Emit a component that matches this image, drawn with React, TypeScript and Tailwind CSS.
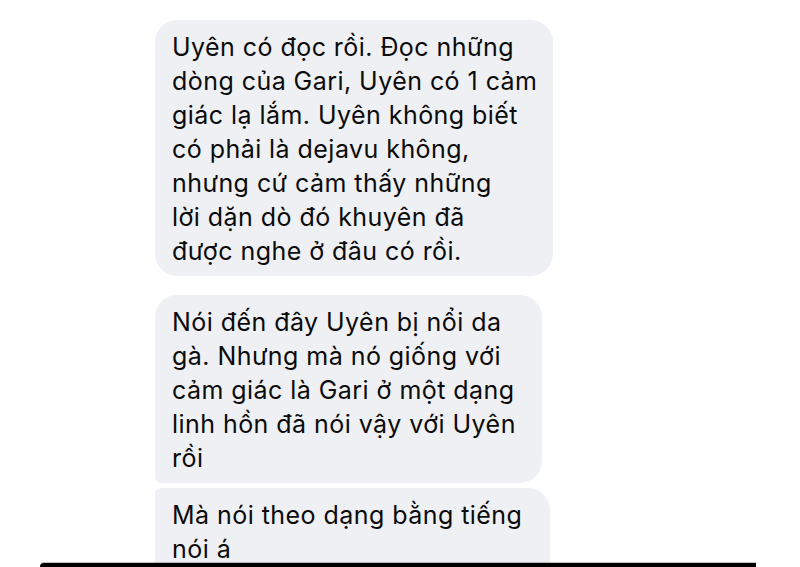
import React from 'react';

interface Bubble {
    lines: string[];
    width: string;
    corners: string;
    gap: string;
}

const bubbles: Bubble[] = [
    {
        lines: [
            'Uyên có đọc rồi. Đọc những',
            'dòng của Gari, Uyên có 1 cảm',
            'giác lạ lắm. Uyên không biết',
            'có phải là dejavu không,',
            'nhưng cứ cảm thấy những',
            'lời dặn dò đó khuyên đã',
            'được nghe ở đâu có rồi.',
        ],
        width: 'w-[398px]',
        corners: 'rounded-[22px]',
        gap: 'mt-[20px]',
    },
    {
        lines: [
            'Nói đến đây Uyên bị nổi da',
            'gà. Nhưng mà nó giống với',
            'cảm giác là Gari ở một dạng',
            'linh hồn đã nói vậy với Uyên',
            'rồi',
        ],
        width: 'w-[387px]',
        corners: 'rounded-[22px] rounded-bl-[6px]',
        gap: 'mt-[19px]',
    },
    {
        lines: ['Mà nói theo dạng bằng tiếng', 'nói á', ''],
        width: 'w-[395px]',
        corners: 'rounded-[22px] rounded-tl-[6px]',
        gap: 'mt-[5px]',
    },
];

const App: React.FC = () => {
    return (
        <div
            className="relative h-[567px] w-[800px] overflow-hidden bg-white"
            style={{ fontFamily: 'Inter, "Noto Sans", sans-serif' }}
        >
            <div className="flex flex-col pl-[155px]">
                {bubbles.map((b, i) => (
                    <div
                        key={i}
                        className={`${b.width} ${b.corners} ${b.gap} bg-[#eff0f4] px-[17px] pt-[10px] pb-[8px] text-[25px] leading-[34px] tracking-[0.45px] text-[#0b0b0b]`}
                    >
                        {b.lines.map((l, j) => (
                            <div key={j} className="whitespace-nowrap">
                                {l || '\u00a0'}
                            </div>
                        ))}
                    </div>
                ))}
            </div>

            {/* dark edge at the bottom of the photo */}
            <div className="absolute bottom-0 left-[40px] h-[4px] w-[716px] rounded-tl-[4px] bg-black shadow-[0_-1px_1px_rgba(0,0,0,0.25)]" />
        </div>
    );
};

export default App;
